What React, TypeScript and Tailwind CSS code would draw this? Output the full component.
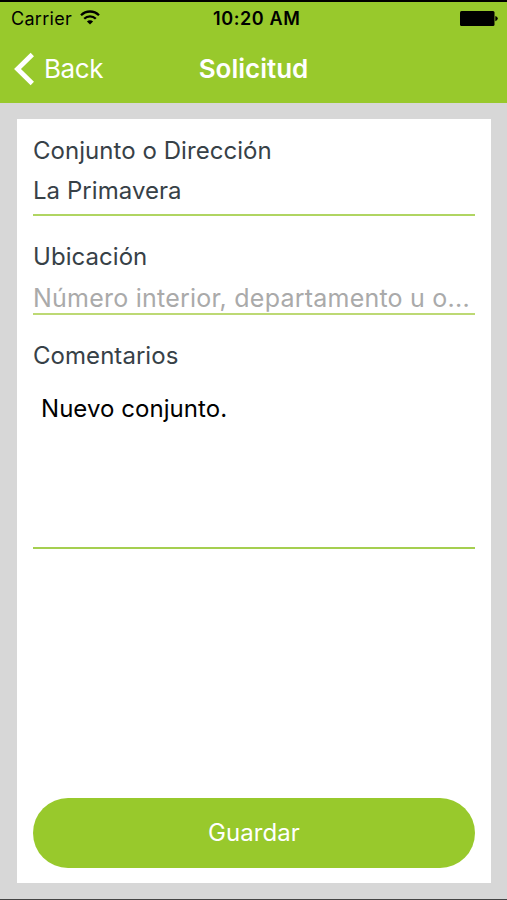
const fields = [
    {
        label: "Conjunto o Dirección",
        value: "La Primavera",
        size: "h-[97px] pt-[18px]",
        line: "border-[#b0d562]",
        text: "mt-[12px]",
    },
    {
        label: "Ubicación",
        value: "Número interior, departamento u o...",
        size: "h-[99px] pt-[27px]",
        line: "border-[#bdd974]",
        text: "mt-[13px] text-[25px] tracking-[0.23px] text-[#aaaaaa]",
    },
];

function StatusBar() {
    return (
        <div className="relative flex h-[33px] items-center justify-between pl-[11px] pr-[9px] text-black">
            <div className="flex items-center gap-[8px]">
                <span className="text-[18px] leading-[20px] tracking-[0.3px]">Carrier</span>
                <svg className="mb-[2px]" width="20" height="15" viewBox="0 0 20 15" fill="none" stroke="currentColor" strokeWidth="2.3">
                    <path d="M1 5.2a12.8 12.8 0 0 1 18 0" />
                    <path d="M4.2 8.8a8.2 8.2 0 0 1 11.6 0" />
                    <path d="M10 14.6l-3.1-3.1a4.4 4.4 0 0 1 6.2 0z" fill="currentColor" stroke="none" />
                </svg>
            </div>
            <span className="absolute left-[213px] text-[18px] font-semibold leading-[20px] tracking-[0.6px]">
                10:20 AM
            </span>
            <svg className="mb-[1px]" width="38" height="15" viewBox="0 0 38 15" fill="currentColor">
                <rect width="34.5" height="15" rx="1.5" />
                <path d="M35.3 5q2.5.7 2.5 2.6t-2.5 2.6z" />
            </svg>
        </div>
    );
}

function NavBar() {
    return (
        <div className="grid h-[68px] grid-cols-3 items-center px-[14px] text-white">
            <div className="flex items-center gap-[9px]">
                <svg className="mb-[1px]" width="21" height="34" viewBox="0 0 21 34" fill="none" stroke="currentColor" strokeWidth="4.8">
                    <path d="M18.3 2.5L3.5 17l14.8 14.5" />
                </svg>
                <span className="text-[26px] leading-[30px] tracking-[-0.4px]">Back</span>
            </div>
            <h1 className="text-center text-[26px] font-semibold leading-[30px]">Solicitud</h1>
        </div>
    );
}

export default function App() {
    return (
        <div className="flex h-[900px] w-[507px] flex-col border-b border-[#444444] bg-[#d7d7d7] font-['Inter',sans-serif]">
            <header className="h-[103px] border-t-2 border-black bg-[#98c92c]">
                <StatusBar />
                <NavBar />
            </header>

            <main className="ml-[17px] mr-[16px] mt-[16px] flex h-[764px] flex-col bg-white px-[16px] text-[24px] leading-[28px] tracking-[0.05px] text-[#374147]">
                {fields.map((f) => (
                    <div key={f.label} className={`border-b-2 ${f.line} ${f.size}`}>
                        <div>{f.label}</div>
                        <div className={`whitespace-nowrap ${f.text}`}>{f.value}</div>
                    </div>
                ))}

                <div className="h-[234px] border-b-2 border-[#a5cf50] pt-[27px]">
                    <div>Comentarios</div>
                    <div className="mt-[25px] pl-[8px] text-black">Nuevo conjunto.</div>
                </div>

                <button className="mt-auto mb-[15px] h-[70px] rounded-full bg-[#98c92c] text-white">
                    Guardar
                </button>
            </main>
        </div>
    );
}
